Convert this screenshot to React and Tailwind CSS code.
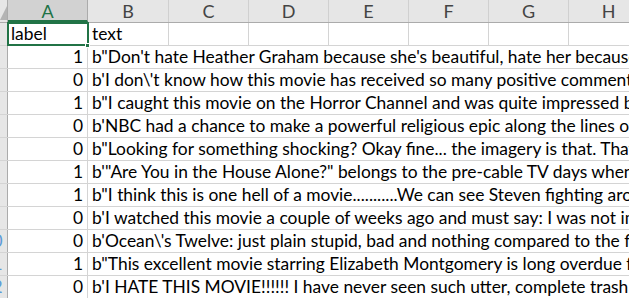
import React from 'react';

const cols = ['A', 'B', 'C', 'D', 'E', 'F', 'G', 'H'];
const widths = ['w-[80px]', 'w-[81px]', 'w-[80px]', 'w-[80px]', 'w-[80px]', 'w-[80px]', 'w-[80px]', 'w-[80px]'];

const rows = [
  [1, `b"Don't hate Heather Graham because she's beautiful, hate her because she's fun to watch in this movie.`],
  [0, `b'I don\\'t know how this movie has received so many positive comments. One call it "artistic"`],
  [1, `b"I caught this movie on the Horror Channel and was quite impressed by it."`],
  [0, `b'NBC had a chance to make a powerful religious epic along the lines of The Ten Commandments'`],
  [0, `b"Looking for something shocking? Okay fine... the imagery is that. That's about it."`],
  [1, `b'"Are You in the House Alone?" belongs to the pre-cable TV days when the networks'`],
  [1, `b"I think this is one hell of a movie...........We can see Steven fighting around with his style"`],
  [0, `b'I watched this movie a couple of weeks ago and must say: I was not impressed at all.'`],
  [0, `b'Ocean\\'s Twelve: just plain stupid, bad and nothing compared to the first one.'`],
  [1, `b"This excellent movie starring Elizabeth Montgomery is long overdue for a DVD release."`],
  [0, `b'I HATE THIS MOVIE!!!!!! I have never seen such utter, complete trash in my whole life.'`],
];

function RowHead({ n }) {
  return (
    <div className="w-[8px] shrink-0 overflow-hidden bg-[#e6e6e6] border-r border-[#ababab]">
      <div className="w-[31px] -ml-[23px] text-center text-[#5c9bd8] leading-[22px]">{n}</div>
    </div>
  );
}

export default function App() {
  return (
    <div className="w-[629px] h-[298px] overflow-hidden bg-white text-[17.4px] text-black font-['Lato','Noto_Sans',sans-serif]">
      <div className="flex h-[23px] bg-[#e6e6e6] border-b border-[#ababab] text-[18px]">
        <div className="w-[8px] shrink-0 border-r border-[#ababab] flex items-end justify-end">
          <svg width="7" height="14" viewBox="0 0 7 14" className="mb-[2px]">
            <polygon points="7,0 7,14 0,14" fill="#b4b4b4" />
          </svg>
        </div>
        {cols.map((c, i) => (
          <div
            key={c}
            className={`${widths[i]} shrink-0 text-center leading-[22px] border-r ${
              i === 0
                ? 'bg-[#d2d2d2] text-[#217346] border-[#ababab] border-b-2 border-b-[#217346]'
                : 'text-[#444444] border-[#d0d0d0]'
            }`}
          >
            {c}
          </div>
        ))}
      </div>

      <div className="flex h-[23px] border-b border-[#d4d4d4]">
        <RowHead n={1} />
        <div className="w-[80px] shrink-0 border-r border-[#d4d4d4] pl-[3px] leading-[22px] outline-2 outline-[#217346] -outline-offset-1 relative">
          label
          <div className="absolute -right-[3px] -bottom-[3px] w-[5px] h-[5px] bg-[#217346] border border-white" />
        </div>
        <div className="w-[81px] shrink-0 border-r border-[#d4d4d4] pl-[4px] leading-[22px]">text</div>
        {cols.slice(2).map((c) => (
          <div key={c} className="w-[80px] shrink-0 border-r border-[#d4d4d4]" />
        ))}
      </div>

      {rows.map(([label, text], i) => (
        <div key={i} className="flex h-[23px] border-b border-[#d4d4d4]">
          <RowHead n={i + 2} />
          <div className="w-[80px] shrink-0 border-r border-[#d4d4d4] pr-[4px] text-right leading-[22px]">{label}</div>
          <div className="flex-1 whitespace-nowrap overflow-hidden pl-[4px] leading-[22px]">{text}</div>
        </div>
      ))}
    </div>
  );
}
